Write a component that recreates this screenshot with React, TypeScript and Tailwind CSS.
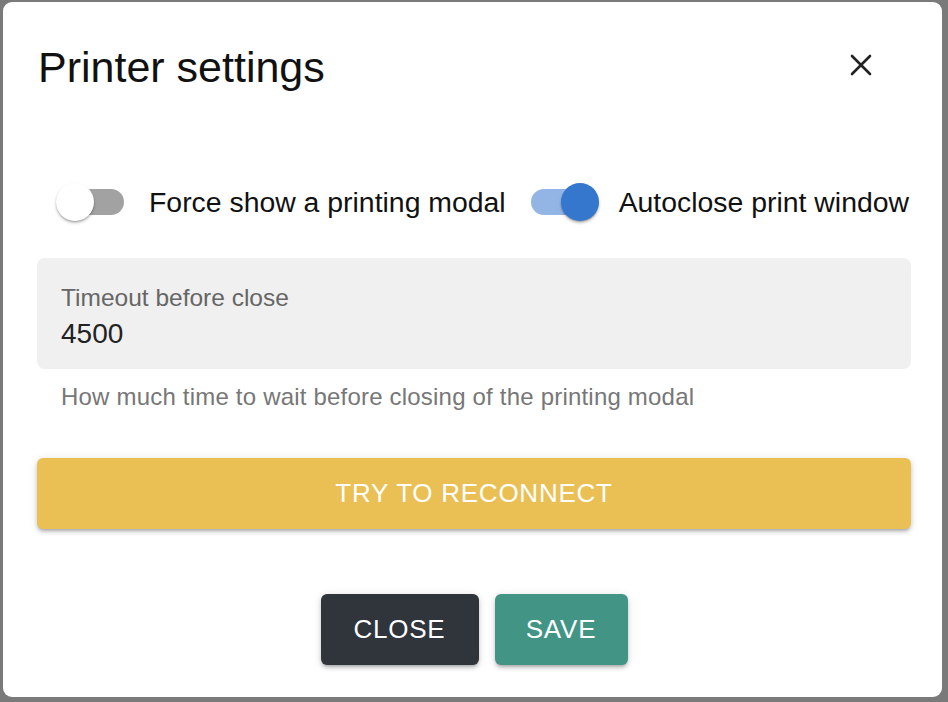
import React from "react";

function Switch({ on }: { on: boolean }) {
  return (
    <div className="relative w-[68px] h-[40px] shrink-0">
      <div
        className={
          "absolute top-[7px] h-[26px] rounded-full " +
          (on ? "left-0 right-[4px] bg-[#93b5e6]" : "left-[4px] right-0 bg-[#a2a2a2]")
        }
      />
      <div
        className={
          "absolute top-[1px] w-[38px] h-[38px] rounded-full shadow-[0_2px_3px_rgba(0,0,0,0.25),0_1px_1px_rgba(0,0,0,0.14)] " +
          (on ? "right-0 bg-[#3477cc]" : "left-0 bg-white")
        }
      />
    </div>
  );
}

const btnShadow =
  "shadow-[0_3px_3px_-2px_rgba(0,0,0,0.2),0_3px_4px_0_rgba(0,0,0,0.14),0_1px_8px_0_rgba(0,0,0,0.12)]";

export default function App() {
  return (
    <div className="w-[948px] h-[702px] bg-[#7a7a7a] pt-[2px] pl-[3px] pr-[6px] pb-[5px] font-['Liberation_Sans',Arial,sans-serif]">
      <div className="w-full h-full bg-white rounded-[9px] pl-[34px] pr-[31px] pt-[41px] flex flex-col">
        <div className="flex items-center justify-between h-[48px]">
          <h2 className="ml-[1px] text-[43px] leading-[48px] text-[#111]">Printer settings</h2>
          <svg
            className="mr-[39px] -mt-[4px]"
            width="22"
            height="22"
            viewBox="0 0 22 22"
            fill="none"
            stroke="#222"
            strokeWidth="2.6"
            strokeLinecap="round"
          >
            <path d="M2 2L20 20M20 2L2 20" />
          </svg>
        </div>

        <div className="mt-[91px] flex items-center">
          <div className="ml-[19px]">
            <Switch on={false} />
          </div>
          <span className="ml-[25px] text-[28.4px] leading-[32px] text-[#111]">Force show a printing modal</span>
          <div className="ml-[25px]">
            <Switch on={true} />
          </div>
          <span className="ml-[20px] text-[28.4px] leading-[32px] text-[#111]">Autoclose print window</span>
        </div>

        <div className="mt-[36px] h-[111px] bg-[#f0f0f0] rounded-[8px] pl-[24px] pt-[26px] flex flex-col">
          <span className="text-[24.5px] leading-[28px] text-[#666]">Timeout before close</span>
          <span className="mt-[6px] text-[28px] leading-[32px] text-[#222]">4500</span>
        </div>
        <p className="mt-[14px] pl-[24px] text-[24px] leading-[28px] text-[#777] tracking-[0.2px]">
          How much time to wait before closing of the printing modal
        </p>

        <button className={"mt-[47px] h-[71px] w-full rounded-[6px] bg-[#eac055] text-white text-[26px] tracking-[0.75px] " + btnShadow}>
          TRY TO RECONNECT
        </button>

        <div className="mt-[65px] flex justify-center gap-[16px]">
          <button className={"h-[71px] w-[158px] rounded-[6px] bg-[#30343b] text-white text-[26px] tracking-[0.75px] " + btnShadow}>
            CLOSE
          </button>
          <button className={"h-[71px] w-[133px] rounded-[6px] bg-[#429585] text-white text-[26px] tracking-[0.75px] " + btnShadow}>
            SAVE
          </button>
        </div>
      </div>
    </div>
  );
}
